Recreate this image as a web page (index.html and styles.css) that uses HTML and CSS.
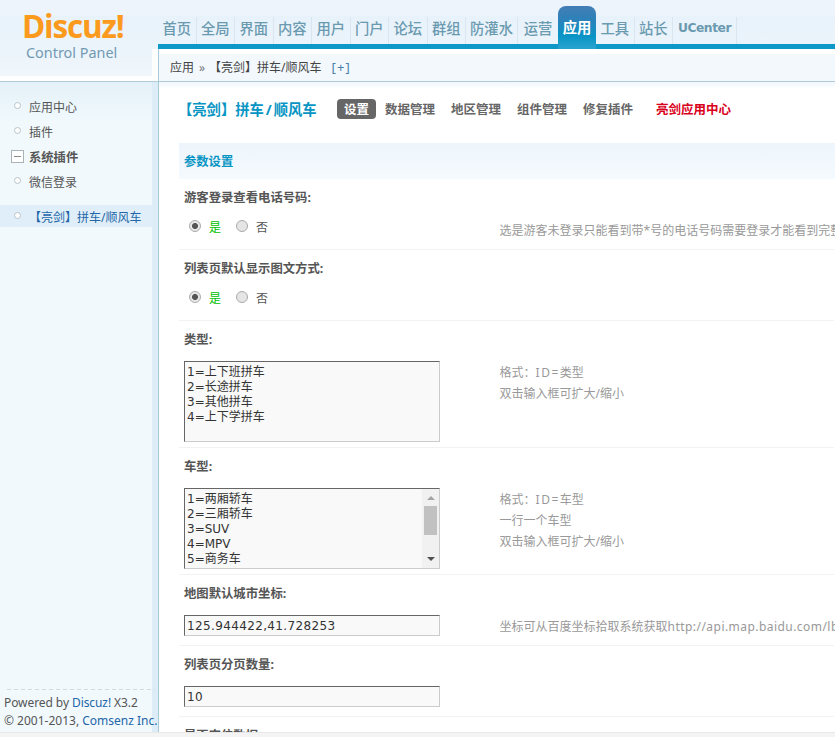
FILE: index.html
```html
<!DOCTYPE html>
<html lang="zh-CN">
<head>
<meta charset="utf-8">
<title>Discuz! Control Panel</title>
<link rel="stylesheet" href="styles.css">
</head>
<body>
<div class="app">
  <header class="header">
    <div class="brand">
      <div class="logo">Discuz!</div>
      <div class="tagline">Control Panel</div>
    </div>
    <div class="head-main">
      <nav class="nav">
        <a>首页</a><a>全局</a><a>界面</a><a>内容</a><a>用户</a><a>门户</a><a>论坛</a><a>群组</a><a class="wide">防灌水</a><a class="last">运营</a><a class="active">应用</a><a>工具</a><a>站长</a><a class="uc">UCenter</a>
      </nav>
      <div class="crumbs"><span>应用</span><i>»</i><span>【亮剑】拼车/顺风车</span><b>[+]</b></div>
    </div>
  </header>
  <div class="body">
    <aside class="side">
      <ul class="menu">
        <li><i class="dot"></i>应用中心</li>
        <li><i class="dot"></i>插件</li>
        <li class="group"><i class="minus"></i>系统插件</li>
        <li><i class="dot"></i>微信登录</li>
        <li class="current"><i class="dot"></i><span>【亮剑】拼车/顺风车</span></li>
      </ul>
      <div class="copyright">
        <p class="line1">Powered by <a>Discuz!</a> X3.2</p>
        <p class="line2">© 2001-2013, <a>Comsenz Inc.</a></p>
      </div>
    </aside>
    <main class="content">
      <div class="tabs">
        <h3>【亮剑】拼车<em>/</em>顺风车</h3>
        <a class="on">设置</a><a>数据管理</a><a>地区管理</a><a>组件管理</a><a>修复插件</a><a class="red">亮剑应用中心</a>
      </div>
      <div class="form">
        <h4>参数设置</h4>
        <section class="row short">
          <h5>游客登录查看电话号码:</h5>
          <div class="field radios"><i class="radio checked"></i><span class="yes">是</span><i class="radio"></i><span>否</span></div>
          <div class="hint">选是游客未登录只能看到带<span class="star">*</span>号的电话号码需要登录才能看到完整</div>
        </section>
        <section class="row short">
          <h5>列表页默认显示图文方式:</h5>
          <div class="field radios"><i class="radio checked"></i><span class="yes">是</span><i class="radio"></i><span>否</span></div>
        </section>
        <section class="row tall">
          <h5>类型:</h5>
          <div class="field area"><div class="text">1=上下班拼车<br>2=长途拼车<br>3=其他拼车<br>4=上下学拼车</div></div>
          <div class="hint">格式：<span class="lat">ID=</span>类型<br>双击输入框可扩大/缩小</div>
        </section>
        <section class="row tall">
          <h5>车型:</h5>
          <div class="field area"><div class="text">1=两厢轿车<br>2=三厢轿车<br>3=SUV<br>4=MPV<br>5=商务车</div>
            <div class="scroll"><i class="up"></i><i class="thumb"></i><i class="down"></i></div></div>
          <div class="hint">格式：<span class="lat">ID=</span>车型<br>一行一个车型<br>双击输入框可扩大/缩小</div>
        </section>
        <section class="row short">
          <h5>地图默认城市坐标:</h5>
          <div class="field input number">125.944422,41.728253</div>
          <div class="hint">坐标可从百度坐标拾取系统获取<span class="url">http://api.map.baidu.com/lb</span></div>
        </section>
        <section class="row short">
          <h5>列表页分页数量:</h5>
          <div class="field input number">10</div>
        </section>
        <section class="row short">
          <h5>是否定位数据:</h5>
        </section>
      </div>
    </main>
  </div>
  <footer class="status"></footer>
</div>
</body>
</html>
```
FILE: styles.css
```css
* { box-sizing: border-box; margin: 0; padding: 0; }
i, em { font-style: normal; }
body {
  width: 835px; height: 737px; overflow: hidden;
  font: 12px/21px "Noto Sans", "Noto Sans CJK SC", sans-serif;
  color: #555; background: #fff;
}
.app { height: 737px; display: flex; flex-direction: column; overflow: hidden; white-space: nowrap; }

.header {
  height: 82px; flex: none; display: flex;
  border-bottom: 1px solid #b0ccd8;
  background: linear-gradient(#edf4fb 0 16px, #e8f2fa 16px, #eff6fc 76px, #fff 76px);
}
.brand { width: 152px; flex: none; padding: 9px 0 0 22px; }
.logo { font: 700 31.5px/34px "Open Sans", sans-serif; color: #fb9a1c; letter-spacing: -1.2px; }
.tagline { font: 14.4px/19px "Noto Sans", sans-serif; color: #7299b2; padding-left: 4px; }
.head-main { flex: 1; min-width: 0; padding-left: 6px; display: flex; flex-direction: column; background: linear-gradient(90deg, #fff 6px, transparent 6px) 0 49px no-repeat; }
.nav {
  height: 49px; flex: none; display: flex; align-items: flex-end;
  border-bottom: 5px solid #0d98c8; padding-left: 0;
}
.nav a {
  width: 38.5px; height: 27px; flex: none; text-align: center;
  font-size: 14.3px; line-height: 23px; font-weight: 500; color: #6a9ab0;
  border-right: 1px solid #d9e5ef;
}
.nav .wide { width: 52px; }
.nav .last { width: 40px; border: 0; }
.nav .active {
  height: 43px; width: 38px; margin-bottom: -5px; padding-top: 10px; line-height: 24px; border: 0;
  font-weight: 700; color: #fff; border-radius: 8px 8px 0 0;
  background: linear-gradient(#437eb5, #2f80b8 12px, #0994c6 30px, #2ba4cf);
}
.nav .uc { width: 64px; font: 700 12.3px/23px "DejaVu Sans", sans-serif; letter-spacing: -0.45px; }
.crumbs {
  height: 32px; padding: 5px 0 0 11px; display: flex; line-height: 27px;
  border-left: 1px solid #a8cadb; color: #444;
  background: linear-gradient(#fff 0 5px, #f2f8fc 5px);
}
.crumbs i { width: 15px; padding-left: 5px; color: #777; }
.crumbs b { font-weight: 400; font-size: 13px; color: #4a80a8; letter-spacing: 1.2px; margin-left: 10px; }

.body { flex: 1; min-height: 0; display: flex; }
.side {
  width: 159px; flex: none; display: flex; flex-direction: column; justify-content: space-between;
  border-right: 1px solid #a8cadb;
  background: linear-gradient(90deg, transparent 152px, #ddedf8 152px), linear-gradient(#e4f1f8, #f1f9fd 40px);
}
.menu { list-style: none; padding-top: 13px; width: 152px; }
.menu li { height: 25px; line-height: 25px; display: flex; padding-left: 14px; }
.dot { width: 7px; height: 7px; border: 1px solid #b9c4c9; border-radius: 50%; margin: 7px 8px 0 0; background: #fff; }
.menu .group { font-weight: 700; font-size: 12.3px; padding-left: 11px; }
.minus {
  width: 13px; height: 13px; margin: 5px 5px 0 0; border: 1px solid #aab4b8;
  background: linear-gradient(#888, #888) center / 7px 1px no-repeat #fff;
}
.menu .current { margin-top: 10px; height: 22px; line-height: 25px; background: #dfeef8; color: #2366a8; }
.copyright { height: 43px; background: repeating-linear-gradient(90deg, #d0dce1 0 4px, transparent 4px 7px) 7px 0 / 148px 1px no-repeat; padding: 5px 0 0 4px; }
.copyright p { line-height: 18px; }
.copyright a { color: #2366a8; }
.line1 { letter-spacing: -0.08px; }

.content { flex: 1; min-width: 0; padding-left: 20px; background: linear-gradient(#f0f7fc, #fff 7px); overflow: hidden; }
.tabs { height: 61px; padding-top: 17px; display: flex; align-items: flex-start; line-height: 21px; font-weight: 700; color: #666; }
.tabs h3 { width: 158px; font-size: 14.3px; color: #0995c4; text-indent: -1px; }
.tabs h3 em { padding: 0 2px; }
.tabs a { margin-right: 16px; flex: none; font-size: 12.5px; }
.tabs .on { height: 20px; background: #666; color: #fff; border-radius: 4px; width: 39px; text-align: center; margin-right: 9px; }
.tabs .red { color: #d9001b; margin-left: 7px; }
.form h4 { height: 36px; line-height: 37px; padding-left: 5px; font-size: 12.3px; color: #0995c4; background: linear-gradient(#edf5fc, #f5fafe); }
.row {
  display: grid; grid-template-columns: 315px 1fr; grid-template-rows: 40px 1fr;
  padding-left: 5px; border-bottom: 1px solid #eff3f5; margin-right: 1px;
}
.short { height: 71px; }
.tall { height: 127px; }
.row h5 { grid-column: 1 / 3; font-size: 12.35px; line-height: 38px; color: #555; }
.field { width: 256px; }
.radios { display: flex; padding-left: 5px; line-height: 16px; }
.radio { width: 12px; height: 12px; margin: 1px 8px 0 0; border: 1px solid #aaa; border-radius: 50%; background: #e5e5e5; }
.checked { background: radial-gradient(circle, #555 0 2.6px, #e8e8e8 3.4px); }
.radios span { line-height: 17px; }
.radios .yes { color: #00bf00; margin-right: 15px; }
.area, .input {
  border: 1px solid; border-color: #666 #ccc #ccc #666; background: #f9f9f9; color: #333;
  font: 12px/15px "DejaVu Sans", "Noto Sans CJK SC", sans-serif;
}
.area { height: 81px; display: flex; justify-content: space-between; overflow: hidden; }
.text { padding: 3px 2px; }
.input { height: 21px; line-height: 20px; padding-left: 2px; }
.number { letter-spacing: 0.36px; }
.scroll { width: 17px; background: #f1f1f1; display: flex; flex-direction: column; align-items: center; }
.up, .down { border: 4px solid transparent; }
.up { border-bottom-color: #a3a3a3; border-top: 0; margin: 7px 0 6px; }
.thumb { width: 13px; height: 29px; background: #c1c1c1; }
.down { border-top-color: #505050; border-bottom: 0; margin-top: 22px; }
.hint { grid-column: 2; color: #999; line-height: 21px; padding: 1px 0 0 0.6px; }
.lat { letter-spacing: 1.5px; }
.url { letter-spacing: 0.45px; }
.status { height: 5px; flex: none; background: #f4f4f4; border-top: 1px solid #e8e8e8; }
```
